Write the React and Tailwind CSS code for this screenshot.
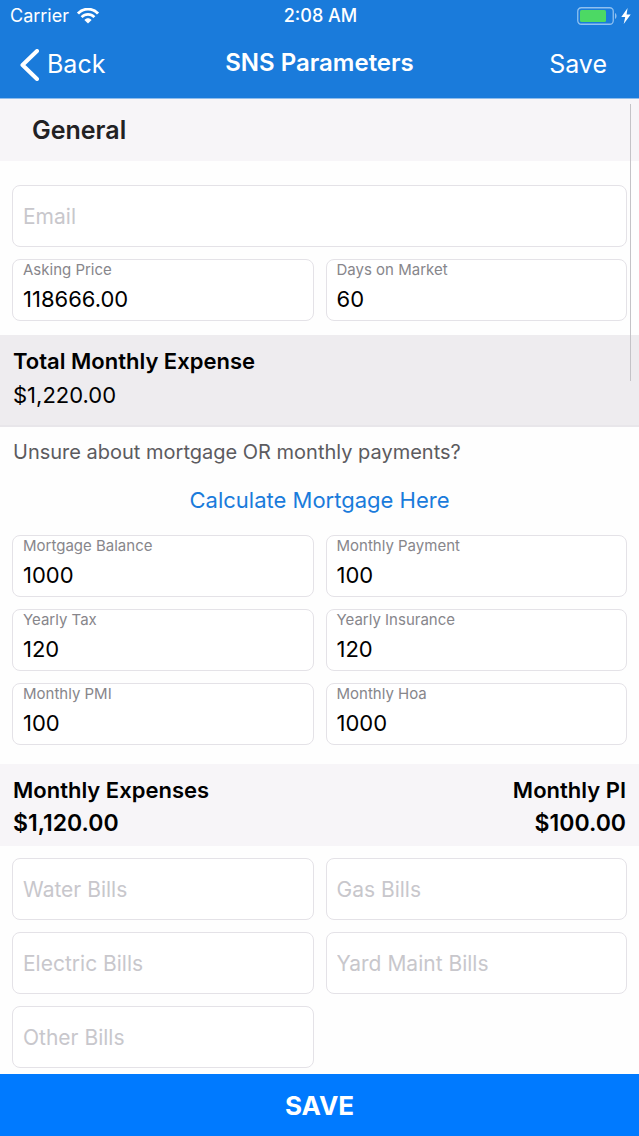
import React, { useState } from 'react';

function StatusBar() {
    return (
        <div className="grid grid-cols-[1fr_auto_1fr] items-center h-8 pl-[10px] pr-2">
            <div className="flex items-center gap-2 text-lg">
                Carrier
                <svg className="w-[22px] h-4" viewBox="0 0 22 16" fill="none" aria-hidden="true">
                    <path d="M1 5.6C6.5-.4 15.5-.4 21 5.6" stroke="currentColor" strokeWidth="2.8" />
                    <path d="M4.6 9.2c3.7-3.8 9.1-3.8 12.8 0" stroke="currentColor" strokeWidth="2.6" />
                    <path d="M7.4 12c2-2.2 5.2-2.2 7.2 0L11 15.6z" fill="currentColor" />
                </svg>
            </div>
            <div className="text-center text-lg font-medium">2:08 AM</div>
            <div className="flex items-center justify-end gap-1">
                <svg className="w-10 h-[18px]" viewBox="0 0 40 18" fill="none" aria-hidden="true">
                    <rect x="0.75" y="0.75" width="35.5" height="16.5" rx="3.5" stroke="#8fc0f0" strokeWidth="1.3" />
                    <rect x="3" y="3" width="26" height="12" rx="1.5" fill="#4cd964" />
                    <path d="M38 6c2 .8 2 5.2 0 6z" fill="#8fc0f0" />
                </svg>
                <svg className="w-[10px] h-4" viewBox="0 0 10 16" fill="currentColor" aria-hidden="true">
                    <path d="M6.6 0L.3 9h3.9L2.7 16 9.7 6.4H5.6z" />
                </svg>
            </div>
        </div>
    );
}

function Field({ id, label, value, onChange }) {
    const filled = value !== '';

    return (
        <div className="flex flex-col h-[62px] bg-white border border-[#e4e2e7] rounded-lg">
            {filled && (
                <label htmlFor={id} className="px-[10px] pt-px text-[15px] leading-[18px] text-[#87868b]">
                    {label}
                </label>
            )}
            <input
                id={id}
                type="text"
                value={value}
                placeholder={label}
                aria-label={label}
                onChange={(e) => onChange(id, e.target.value)}
                className="flex-1 w-full min-h-0 px-[10px] bg-transparent text-[22px] text-black placeholder:text-[21px] placeholder:text-[#c8c7cc] outline-none"
            />
        </div>
    );
}

const mortgageFields = [
    { id: 'mortgageBalance', label: 'Mortgage Balance' },
    { id: 'monthlyPayment', label: 'Monthly Payment' },
    { id: 'yearlyTax', label: 'Yearly Tax' },
    { id: 'yearlyInsurance', label: 'Yearly Insurance' },
    { id: 'monthlyPmi', label: 'Monthly PMI' },
    { id: 'monthlyHoa', label: 'Monthly Hoa' },
];

const billFields = [
    { id: 'water', label: 'Water Bills' },
    { id: 'gas', label: 'Gas Bills' },
    { id: 'electric', label: 'Electric Bills' },
    { id: 'yard', label: 'Yard Maint Bills' },
    { id: 'other', label: 'Other Bills' },
];

export default function App() {
    const [data, setData] = useState({
        email: '',
        askingPrice: '118666.00',
        daysOnMarket: '60',
        mortgageBalance: '1000',
        monthlyPayment: '100',
        yearlyTax: '120',
        yearlyInsurance: '120',
        monthlyPmi: '100',
        monthlyHoa: '1000',
        water: '',
        gas: '',
        electric: '',
        yard: '',
        other: '',
    });

    const handleChange = (id, value) => setData((prev) => ({ ...prev, [id]: value }));

    return (
        <form
            onSubmit={(e) => e.preventDefault()}
            className="flex flex-col min-h-screen bg-[#fefefe] text-black font-['Inter','Liberation_Sans',sans-serif]"
        >
            <header className="bg-[#1a7bdb] text-white border-b border-[#8fbdec]">
                <StatusBar />
                <div className="grid grid-cols-[1fr_auto_1fr] items-center h-[66px] px-5">
                    <button type="button" className="flex items-center gap-2 justify-self-start text-[25px]">
                        <svg className="w-[19px] h-8" viewBox="0 0 19 32" fill="none" aria-hidden="true">
                            <path
                                d="M17 2L2.5 16 17 30"
                                stroke="currentColor"
                                strokeWidth="4"
                                strokeLinecap="round"
                                strokeLinejoin="round"
                            />
                        </svg>
                        Back
                    </button>
                    <h1 className="pb-1 text-2xl font-semibold">SNS Parameters</h1>
                    <button type="button" className="justify-self-end pr-3 text-[25px]">Save</button>
                </div>
            </header>

            <main className="relative flex-1 pb-[6px]">
                {/* Scroll indicator */}
                <div className="absolute top-[5px] right-2 w-px h-[277px] bg-[#c4c3c7]" />

                <h2 className="px-8 bg-[#f7f5f8] text-[25px] leading-[62px] font-semibold text-[#222124]">General</h2>

                <div className="grid grid-cols-2 gap-3 px-3 pt-6 pb-[14px]">
                    <div className="col-span-2">
                        <Field id="email" label="Email" value={data.email} onChange={handleChange} />
                    </div>
                    <Field id="askingPrice" label="Asking Price" value={data.askingPrice} onChange={handleChange} />
                    <Field id="daysOnMarket" label="Days on Market" value={data.daysOnMarket} onChange={handleChange} />
                </div>

                <section className="h-[92px] px-[13px] pt-[9px] bg-[#eeecef] border-b-2 border-[#e8e6ea]">
                    <h3 className="text-[22px] leading-[34px] font-semibold">Total Monthly Expense</h3>
                    <p className="text-[22px] leading-[34px]">$1,220.00</p>
                </section>

                <p className="px-[13px] pt-2 text-xl leading-[34px] text-[#5c5b5f]">
                    Unsure about mortgage OR monthly payments?
                </p>
                <div className="pt-[14px] pb-[18px] text-center">
                    <a href="#mortgage" className="text-[22px] leading-[34px] text-[#1a7bdb]">Calculate Mortgage Here</a>
                </div>

                <div className="grid grid-cols-2 gap-3 px-3 pb-[19px]">
                    {mortgageFields.map((field) => (
                        <Field key={field.id} {...field} value={data[field.id]} onChange={handleChange} />
                    ))}
                </div>

                <section className="flex justify-between h-[82px] px-[13px] pt-[10px] bg-[#f7f5f8] text-[22px] leading-[33px] font-semibold">
                    <div>
                        <h3>Monthly Expenses</h3>
                        <p className="text-[23px]">$1,120.00</p>
                    </div>
                    <div className="text-right">
                        <h3>Monthly PI</h3>
                        <p className="text-[23px]">$100.00</p>
                    </div>
                </section>

                <div className="grid grid-cols-2 gap-3 px-3 pt-3">
                    {billFields.map((field) => (
                        <Field key={field.id} {...field} value={data[field.id]} onChange={handleChange} />
                    ))}
                </div>
            </main>

            <button type="submit" className="w-full h-[62px] bg-[#007aff] text-[26px] font-bold text-white">
                SAVE
            </button>
        </form>
    );
}
